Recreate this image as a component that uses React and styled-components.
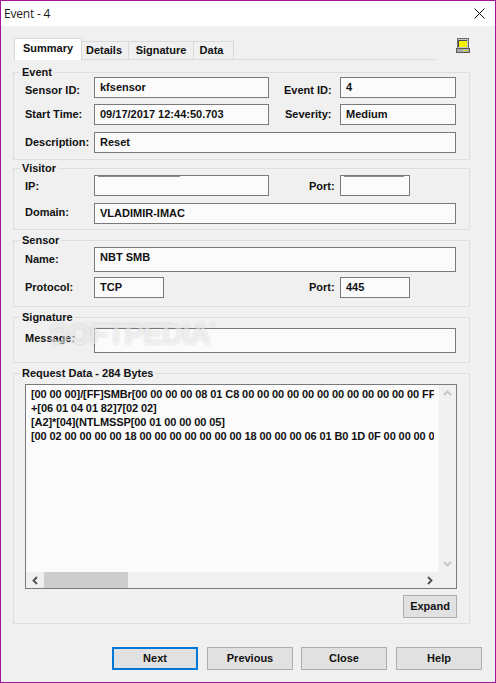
import React from 'react';
import styled, { createGlobalStyle } from 'styled-components';

const GlobalStyle = createGlobalStyle`
  html, body {
    margin: 0;
    padding: 0;
    background: #f0f0f0;
  }
`;

const Win = styled.div`
  position: relative;
  width: 496px;
  height: 683px;
  box-sizing: border-box;
  border: 1px solid #a3149c;
  background: #f0f0f0;
  font-family: "Liberation Sans", Arial, sans-serif;
  font-size: 11px;
  font-weight: 700;
  color: #111;
  overflow: hidden;
`;

const TitleBar = styled.div`
  height: 25px;
  background: #fff;
  display: flex;
  align-items: center;
  justify-content: space-between;
  padding: 0 10px 0 3px;
`;

const TitleText = styled.span`
  font-family: "Open Sans", "Noto Sans", sans-serif;
  font-size: 12px;
  font-weight: 400;
  letter-spacing: -0.2px;
  color: #1a1a1a;
`;

const Body = styled.div`
  padding: 12px 12px 0;
`;

const TabRow = styled.div`
  display: flex;
  align-items: flex-start;
  justify-content: space-between;
  height: 22px;
  margin: 0 12px 12px 1px;
`;

const TabStrip = styled.div`
  display: flex;
  align-items: flex-end;
  width: 421px;
  height: 22px;
  box-sizing: border-box;
  border-bottom: 1px solid #d9d9d9;
`;

const Tab = styled.div`
  box-sizing: border-box;
  width: ${p => p.$w}px;
  height: ${p => (p.$active ? 22 : 18)}px;
  margin-bottom: ${p => (p.$active ? -1 : 0)}px;
  padding: ${p => (p.$active ? 2 : 1)}px ${p => p.$pr || 0}px 0 0;
  text-align: center;
  background: ${p => (p.$active ? '#fff' : '#f0f0f0')};
  border: 1px solid #d9d9d9;
  border-bottom: none;
  border-left: ${p => (p.$active ? '1px solid #d9d9d9' : 'none')};
  line-height: 15px;
`;

const Group = styled.section`
  box-sizing: border-box;
  width: 457px;
  margin-top: ${p => p.$mt || 0}px;
  padding: ${p => p.$pt}px 13px ${p => p.$pb}px 11px;
  border: 1px solid #dedede;
`;

const GroupTitle = styled.div`
  width: fit-content;
  height: 14px;
  line-height: 14px;
  margin: ${p => -(p.$pt + 8)}px 0 ${p => p.$pt - 6}px -5px;
  padding: 0 2px;
  background: #f0f0f0;
`;

const Row = styled.div`
  display: grid;
  grid-template-columns: 69px 175px 71px 116px;
  margin-top: ${p => p.$mt || 0}px;
`;

const Label = styled.div`
  align-self: center;
  padding-top: ${p => p.$dy || 0}px;
  padding-bottom: ${p => p.$up || 0}px;
  white-space: nowrap;
`;

const SideLabel = styled(Label)`
  padding-left: ${p => p.$inset}px;
`;

const Field = styled.div`
  position: relative;
  box-sizing: border-box;
  grid-column: ${p => (p.$wide ? '2 / -1' : 'auto')};
  width: ${p => (p.$w ? `${p.$w}px` : 'auto')};
  height: ${p => p.$h || 21}px;
  padding: 2px 0 0 5px;
  background: #fbfbfb;
  border: 1px solid #7a7a7a;
  line-height: 15px;
  white-space: nowrap;
  overflow: hidden;
`;

const ClippedText = styled.div`
  position: absolute;
  top: 0;
  left: 3px;
  width: ${p => p.$w}px;
  height: 1px;
  background: #8a8a8a;
`;

const DataBox = styled.div`
  display: grid;
  grid-template-columns: minmax(0, 1fr) 17px;
  grid-template-rows: minmax(0, 1fr) 16px;
  box-sizing: border-box;
  width: 432px;
  height: 205px;
  background: #fbfbfb;
  border: 1px solid #7a7a7a;
`;

const DataText = styled.div`
  margin: 2px 5px 0 5px;
  overflow: hidden;
  white-space: nowrap;
  line-height: 14px;
  letter-spacing: -0.1px;
`;

const VScroll = styled.div`
  grid-column: 2;
  grid-row: 1 / 3;
  display: flex;
  flex-direction: column;
  justify-content: space-between;
  align-items: center;
  padding: 4px 0 20px;
  background: #f0f0f0;
`;

const HScroll = styled.div`
  grid-column: 1;
  grid-row: 2;
  display: flex;
  align-items: center;
  padding: 0 5px;
  background: #f0f0f0;
`;

const Thumb = styled.div`
  width: 84px;
  height: 16px;
  background: #cdcdcd;
  margin: 0 auto 0 4px;
`;

const ExpandRow = styled.div`
  display: flex;
  justify-content: flex-end;
  width: 432px;
  margin-top: 6px;
`;

const Btn = styled.button`
  box-sizing: border-box;
  width: ${p => p.$w || 86}px;
  height: 23px;
  margin: 0 0 0 ${p => p.$ml || 0}px;
  padding: 0 0 2px;
  background: #e1e1e1;
  border: ${p => (p.$focus ? '2px solid #0078d7' : '1px solid #adadad')};
  font: inherit;
  color: #111;
`;

const Footer = styled.div`
  display: flex;
  justify-content: flex-end;
  margin: 23px 1px 0 0;
`;

// softpedia stamp over the dialog
const Watermark = styled.div`
  position: absolute;
  left: 48px;
  top: 316px;
  font-size: 30px;
  font-weight: 700;
  letter-spacing: -1.2px;
  color: rgba(255, 255, 255, 0.55);
  text-shadow: 0 0 3px rgba(0, 0, 0, 0.16);
  pointer-events: none;
  white-space: nowrap;
`;

const WatermarkMark = styled.sup`
  font-size: 8px;
  font-weight: 400;
  vertical-align: 16px;
`;

const Chevron = ({ d, color }) => (
  <svg width="9" height="9" viewBox="0 0 9 9">
    <path d={d} fill="none" stroke={color} strokeWidth="1.8" />
  </svg>
);

const CloseIcon = () => (
  <svg width="11" height="11" viewBox="0 0 11 11">
    <path d="M0.5 0.5L10.5 10.5M10.5 0.5L0.5 10.5" stroke="#111" strokeWidth="1" fill="none" />
  </svg>
);

const ComputerIcon = () => (
  <svg width="16" height="16" viewBox="0 0 16 16" shapeRendering="crispEdges">
    <rect x="2" y="0" width="12" height="10" fill="#6e6e6e" />
    <rect x="3" y="1" width="10" height="9" fill="#c4c4c4" />
    <rect x="3" y="2" width="9" height="7" fill="#4a4a4a" />
    <rect x="4" y="3" width="8" height="6" fill="#f6f000" />
    <rect x="1" y="10" width="14" height="5" fill="#5a5a5a" />
    <rect x="2" y="11" width="12" height="3" fill="#a8a8a8" />
    <rect x="8" y="12" width="3" height="1" fill="#f6f000" />
    <rect x="12" y="12" width="1" height="1" fill="#f6f000" />
  </svg>
);

const requestLines = [
  '[00 00 00]/[FF]SMBr[00 00 00 00 08 01 C8 00 00 00 00 00 00 00 00 00 00 00 00 FF FF 00 00',
  '+[06 01 04 01 82]7[02 02]',
  '[A2]*[04](NTLMSSP[00 01 00 00 00 05]',
  '[00 02 00 00 00 00 18 00 00 00 00 00 00 00 18 00 00 00 06 01 B0 1D 0F 00 00 00 00 00 00',
];

export default function App() {
  return (
    <>
      <GlobalStyle />
      <Win>
        <TitleBar>
          <TitleText>Event - 4</TitleText>
          <CloseIcon />
        </TitleBar>
        <Body>
          <TabRow>
            <TabStrip>
              <Tab $active $w={68}>Summary</Tab>
              <Tab $w={47} $pr={2}>Details</Tab>
              <Tab $w={65}>Signature</Tab>
              <Tab $w={40} $pr={4}>Data</Tab>
            </TabStrip>
            <ComputerIcon />
          </TabRow>

          <Group $pt={4} $pb={6}>
            <GroupTitle $pt={4}>Event</GroupTitle>
            <Row>
              <Label $dy={4}>Sensor ID:</Label>
              <Field>kfsensor</Field>
              <SideLabel $inset={15} $dy={4}>Event ID:</SideLabel>
              <Field>4</Field>
            </Row>
            <Row $mt={6}>
              <Label $up={2}>Start Time:</Label>
              <Field>09/17/2017 12:44:50.703</Field>
              <SideLabel $inset={16} $up={2}>Severity:</SideLabel>
              <Field>Medium</Field>
            </Row>
            <Row $mt={7}>
              <Label $up={2}>Description:</Label>
              <Field $wide>Reset</Field>
            </Row>
          </Group>

          <Group $mt={8} $pt={6} $pb={5}>
            <GroupTitle $pt={6}>Visitor</GroupTitle>
            <Row>
              <Label $dy={1}>IP:</Label>
              <Field><ClippedText $w={82} /></Field>
              <SideLabel $inset={40}>Port:</SideLabel>
              <Field $w={70}><ClippedText $w={60} /></Field>
            </Row>
            <Row $mt={7}>
              <Label $up={4}>Domain:</Label>
              <Field $wide>VLADIMIR-IMAC</Field>
            </Row>
          </Group>

          <Group $mt={10} $pt={6} $pb={8}>
            <GroupTitle $pt={6}>Sensor</GroupTitle>
            <Row>
              <Label $up={2}>Name:</Label>
              <Field $wide $h={25}>NBT SMB</Field>
            </Row>
            <Row $mt={5}>
              <Label $up={2}>Protocol:</Label>
              <Field $w={70}>TCP</Field>
              <SideLabel $inset={40} $up={2}>Port:</SideLabel>
              <Field $w={70}>445</Field>
            </Row>
          </Group>

          <Group $mt={10} $pt={10} $pb={9}>
            <GroupTitle $pt={10}>Signature</GroupTitle>
            <Row>
              <Label $up={5}>Message:</Label>
              <Field $wide $h={25} />
            </Row>
          </Group>

          <Group $mt={10} $pt={10} $pb={5}>
            <GroupTitle $pt={10}>Request Data - 284 Bytes</GroupTitle>
            <DataBox>
              <DataText>
                {requestLines.map(line => <div key={line}>{line}</div>)}
              </DataText>
              <VScroll>
                <Chevron d="M1 6L4.5 2.5L8 6" color="#c4c4c4" />
                <Chevron d="M1 3L4.5 6.5L8 3" color="#c4c4c4" />
              </VScroll>
              <HScroll>
                <Chevron d="M6 1L2.5 4.5L6 8" color="#505050" />
                <Thumb />
                <Chevron d="M3 1L6.5 4.5L3 8" color="#505050" />
              </HScroll>
            </DataBox>
            <ExpandRow>
              <Btn $w={54}>Expand</Btn>
            </ExpandRow>
          </Group>

          <Footer>
            <Btn $focus>Next</Btn>
            <Btn $ml={9}>Previous</Btn>
            <Btn $ml={8}>Close</Btn>
            <Btn $ml={9}>Help</Btn>
          </Footer>
        </Body>
        <Watermark>SOFTPEDIA<WatermarkMark>®</WatermarkMark></Watermark>
      </Win>
    </>
  );
}
